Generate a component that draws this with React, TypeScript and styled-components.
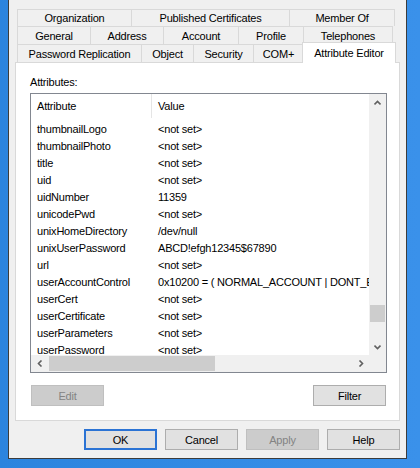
import styled, { createGlobalStyle } from "styled-components";

const GlobalStyle = createGlobalStyle`
    html, body {
        margin: 0;
        padding: 0;
    }
    body {
        width: 420px;
        height: 468px;
        overflow: hidden;
        background: linear-gradient(90deg, #2c84de 0%, #3a91ea 100%);
        font-family: "Liberation Sans", Arial, sans-serif;
        font-size: 11px;
        letter-spacing: -0.2px;
        color: #000;
    }
`

const tabRows = [
    [
        { label: "Organization", w: 115 },
        { label: "Published Certificates", w: 159 },
        { label: "Member Of", w: 106 },
    ],
    [
        { label: "General", w: 74 },
        { label: "Address", w: 74 },
        { label: "Account", w: 76 },
        { label: "Profile", w: 66 },
        { label: "Telephones", w: 90 },
    ],
    [
        { label: "Password Replication", w: 125 },
        { label: "Object", w: 53 },
        { label: "Security", w: 61 },
        { label: "COM+", w: 51 },
        { label: "Attribute Editor", w: 90, selected: true },
    ],
]

const attributes = [
    ["thumbnailLogo", "<not set>"],
    ["thumbnailPhoto", "<not set>"],
    ["title", "<not set>"],
    ["uid", "<not set>"],
    ["uidNumber", "11359"],
    ["unicodePwd", "<not set>"],
    ["unixHomeDirectory", "/dev/null"],
    ["unixUserPassword", "ABCD!efgh12345$67890"],
    ["url", "<not set>"],
    ["userAccountControl", "0x10200 = ( NORMAL_ACCOUNT | DONT_EXPIRE_PASSWD )"],
    ["userCert", "<not set>"],
    ["userCertificate", "<not set>"],
    ["userParameters", "<not set>"],
    ["userPassword", "<not set>"],
]

const Chevron = ({ dir }: { dir: "up" | "down" | "left" | "right" }) => {
    const pts = {
        up: "0.5,4.5 3.5,1.5 6.5,4.5",
        down: "0.5,1.5 3.5,4.5 6.5,1.5",
        left: "4.5,0.5 1.5,3.5 4.5,6.5",
        right: "1.5,0.5 4.5,3.5 1.5,6.5",
    }[dir]
    const vertical = dir === "up" || dir === "down"
    return (
        <svg width={vertical ? 7 : 6} height={vertical ? 6 : 7} viewBox={vertical ? "0 0 7 6" : "0 0 6 7"}>
            <polyline points={pts} fill="none" stroke="#606060" strokeWidth="1.6" />
        </svg>
    )
}

const App = () => {
    return <>
        <GlobalStyle />
        <Dialog>
            <Tabs>
                {tabRows.map((row, i) => (
                    <TabRow key={i} $h={i === 0 ? 17 : 18}>
                        {row.map(t => (
                            <Tab key={t.label} $w={t.w} $selected={!!t.selected}>{t.label}</Tab>
                        ))}
                    </TabRow>
                ))}
            </Tabs>
            <Panel>
                <Label>Attributes:</Label>
                <ListBox>
                    <Content>
                        <Header>
                            <HeaderCell $w={121} $divider>Attribute</HeaderCell>
                            <HeaderCell $w={300}>Value</HeaderCell>
                        </Header>
                        {attributes.map(([name, value]) => (
                            <Row key={name}>
                                <Cell $w={121}>{name}</Cell>
                                <Cell $w={400}>{value}</Cell>
                            </Row>
                        ))}
                    </Content>
                    <VScroll>
                        <Arrow><Chevron dir="up" /></Arrow>
                        <VTrack>
                            <VThumb style={{ marginTop: 194 }} />
                        </VTrack>
                        <Arrow><Chevron dir="down" /></Arrow>
                    </VScroll>
                    <HScroll>
                        <Arrow><Chevron dir="left" /></Arrow>
                        <HTrack>
                            <HThumb style={{ width: 166 }} />
                        </HTrack>
                        <Arrow><Chevron dir="right" /></Arrow>
                    </HScroll>
                    <Corner />
                </ListBox>
                <PanelButtons>
                    <Button $disabled>Edit</Button>
                    <Button>Filter</Button>
                </PanelButtons>
            </Panel>
            <Footer>
                <Button $default>OK</Button>
                <Button>Cancel</Button>
                <Button $disabled>Apply</Button>
                <Button>Help</Button>
            </Footer>
        </Dialog>
    </>
}

export default App;

const Dialog = styled.div`
    margin-left: 8px;
    width: 399px;
    height: 459px;
    box-sizing: border-box;
    background: #f0f0f0;
    border: 1px solid #3c3c3c;
    border-top: none;
    padding: 9px 6px 0;
    display: flex;
    flex-direction: column;
`

const Tabs = styled.div`
    display: flex;
    flex-direction: column;
    padding: 0 2px;
`

const TabRow = styled.div<{ $h: number }>`
    display: flex;
    height: ${p => p.$h}px;
`

const Tab = styled.div<{ $w: number; $selected: boolean }>`
    position: relative;
    flex: none;
    width: ${p => p.$w}px;
    box-sizing: border-box;
    border: 1px solid #d9d9d9;
    border-bottom: none;
    margin-left: -1px;
    &:first-child { margin-left: 0; }
    background: #f0f0f0;
    display: flex;
    align-items: center;
    justify-content: center;
    white-space: nowrap;
    ${p => p.$selected && `
        width: ${p.$w + 4}px;
        margin: -2px -2px -1px -2px;
        height: 21px;
        background: #fff;
        z-index: 2;
        padding-bottom: 1px;
    `}
`

const Panel = styled.div`
    height: 359px;
    box-sizing: border-box;
    background: #fff;
    border: 1px solid #d9d9d9;
    padding: 0 12px 0 14px;
    display: flex;
    flex-direction: column;
`

const Label = styled.div`
    margin-top: 13px;
    height: 17px;
    line-height: 13px;
`

const ListBox = styled.div`
    width: 357px;
    height: 280px;
    box-sizing: border-box;
    border: 1px solid #828790;
    display: grid;
    grid-template-columns: 338px 17px;
    grid-template-rows: 261px 17px;
`

const Content = styled.div`
    overflow: hidden;
    background: #fff;
`

const Header = styled.div`
    display: flex;
    height: 26px;
    align-items: center;
`

const HeaderCell = styled.div<{ $w: number; $divider?: boolean }>`
    flex: none;
    width: ${p => p.$w}px;
    box-sizing: border-box;
    padding-left: 6px;
    height: 24px;
    line-height: 24px;
    margin-top: -2px;
    border-right: ${p => (p.$divider ? "1px solid #e5e5e5" : "none")};
`

const Row = styled.div`
    display: flex;
    height: 17px;
    align-items: center;
    white-space: nowrap;
`

const Cell = styled.div<{ $w: number }>`
    flex: none;
    width: ${p => p.$w}px;
    padding-left: 6px;
    box-sizing: border-box;
    overflow: hidden;
`

const VScroll = styled.div`
    background: #f0f0f0;
    display: flex;
    flex-direction: column;
`

const HScroll = styled.div`
    background: #f0f0f0;
    display: flex;
`

const Corner = styled.div`
    background: #f0f0f0;
`

const Arrow = styled.div`
    flex: none;
    width: 17px;
    height: 17px;
    display: flex;
    align-items: center;
    justify-content: center;
`

const VTrack = styled.div`
    flex: 1;
    display: flex;
    flex-direction: column;
    align-items: center;
`

const VThumb = styled.div`
    width: 15px;
    height: 17px;
    background: #cdcdcd;
`

const HTrack = styled.div`
    flex: 1;
    display: flex;
    align-items: center;
    padding-left: 1px;
`

const HThumb = styled.div`
    height: 15px;
    background: #cdcdcd;
`

const PanelButtons = styled.div`
    display: flex;
    justify-content: space-between;
    margin-top: 12px;
    padding: 0 1px;
`

const Button = styled.div<{ $disabled?: boolean; $default?: boolean }>`
    width: 73px;
    height: 21px;
    box-sizing: border-box;
    display: flex;
    align-items: center;
    justify-content: center;
    background: ${p => (p.$disabled ? "#cccccc" : "#e1e1e1")};
    border: 1px solid ${p => (p.$disabled ? "#bfbfbf" : p.$default ? "#2b73d4" : "#adadad")};
    box-shadow: ${p => (p.$default ? "inset 0 0 0 1px #2b73d4" : "none")};
    color: ${p => (p.$disabled ? "#838383" : "#000")};
`

const Footer = styled.div`
    display: flex;
    justify-content: flex-end;
    gap: 8px;
    margin-top: 8px;
`
